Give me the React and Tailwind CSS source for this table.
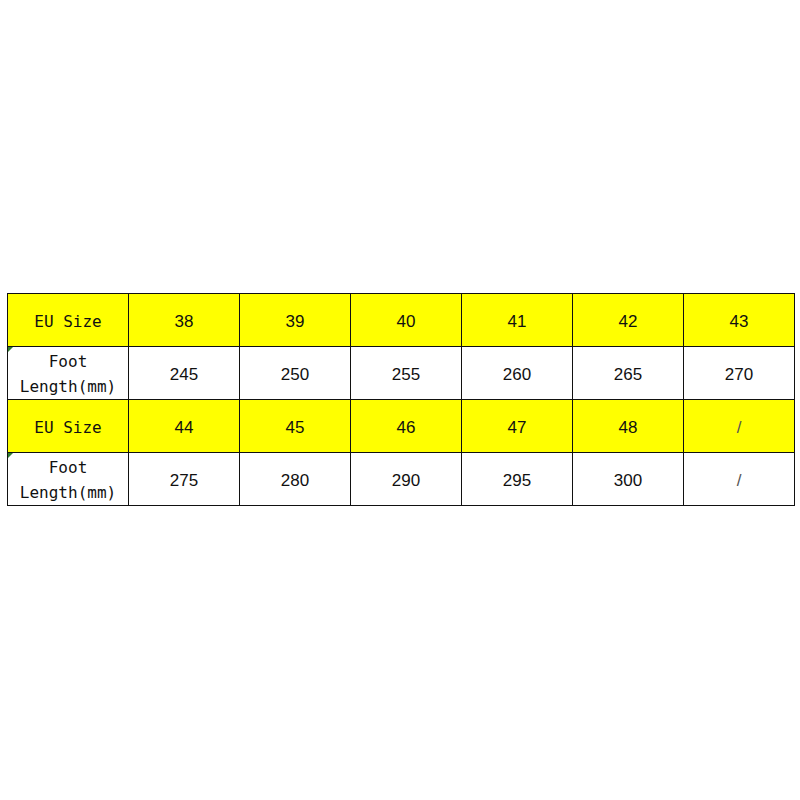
import React from 'react';

const rows = [
  { label: ['EU Size'], values: ['38', '39', '40', '41', '42', '43'], yellow: true },
  { label: ['Foot', 'Length(mm)'], values: ['245', '250', '255', '260', '265', '270'] },
  { label: ['EU Size'], values: ['44', '45', '46', '47', '48', '/'], yellow: true },
  { label: ['Foot', 'Length(mm)'], values: ['275', '280', '290', '295', '300', '/'] },
];

const mono = { fontFamily: '"DejaVu Sans Mono", "Liberation Mono", monospace' };

export default function App() {
  return (
    <div className="w-[800px] h-[800px] bg-white pt-[293px] pl-[7px]">
      <table className="border-collapse table-fixed text-[#111]" style={{ fontFamily: '"Liberation Sans", Arial, sans-serif' }}>
        <colgroup>
          <col className="w-[121px]" />
          {[0, 1, 2, 3, 4, 5].map((i) => (
            <col key={i} className="w-[111px]" />
          ))}
        </colgroup>
        <tbody>
          {rows.map((row, r) => (
            <tr key={r} className={`h-[53px] ${row.yellow ? 'bg-[#ffff00]' : 'bg-white'}`}>
              <td className="relative border-[1.5px] border-[#111] p-0 pt-[2px] text-center text-[16px] leading-[25px]" style={mono}>
                {!row.yellow && (
                  <span className="absolute left-0 top-0 w-0 h-0 border-t-[5px] border-r-[5px] border-t-[#2e7d32] border-r-transparent" />
                )}
                {row.label.map((l) => (
                  <div key={l}>{l}</div>
                ))}
              </td>
              {row.values.map((v, i) => (
                <td key={i} className={`border-[1.5px] border-[#111] p-0 pt-[3px] text-center text-[17px] ${v === '/' ? 'text-[#555]' : ''}`}>
                  {v}
                </td>
              ))}
            </tr>
          ))}
        </tbody>
      </table>
    </div>
  );
}
